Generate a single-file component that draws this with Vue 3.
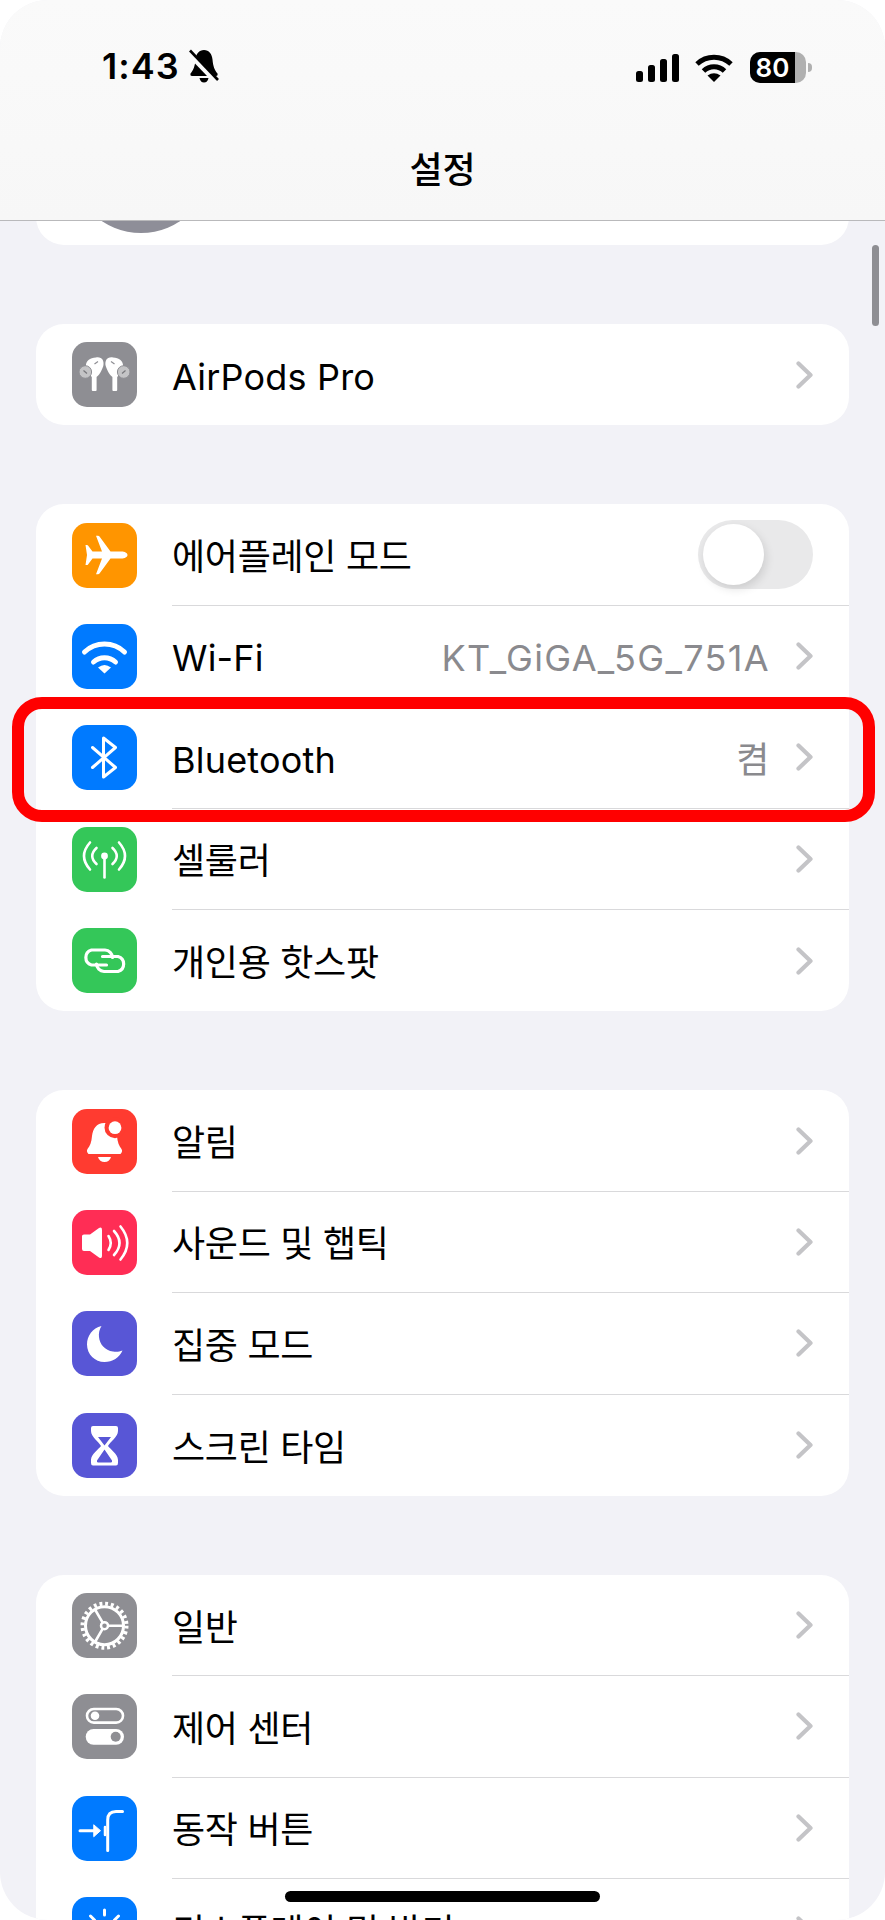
<template>
  <div class="phone">
    <div class="scroll">
      <div class="card profile">
        <div class="avatar"></div>
      </div>

      <div v-for="(group, g) in groups" :key="g" class="card">
        <div v-for="row in group" :key="row.label" class="row">
          <div class="app-icon" :style="{ background: row.color }">
            <svg viewBox="0 0 65 65" width="65" height="65">
              <g v-if="row.icon === 'airpods'">
                <g v-for="side in ['', 'translate(65 0) scale(-1 1)']" :key="side" :transform="side">
                  <rect x="19.800" y="33" width="4.800" height="16" rx="1" fill="#fff" />
                  <path d="M24 15.500C30 14.500 32.500 19 31.300 24 30 28 27 34 24 35H20C17 33 15 28 14 24 13.500 19 18 16 24 15.500z" fill="#fff" />
                  <circle cx="13.300" cy="30" r="6.300" fill="#c4c4c6" stroke="#8e8e93" stroke-width="1" />
                  <path d="M11.500 28.500l3.500 3" stroke="#77777b" stroke-width="1.200" />
                  <path d="M22.500 22l3.500-2.500" stroke="#8e8e93" stroke-width="1.200" />
                </g>
              </g>
              <path v-else-if="row.icon === 'plane'" fill="#fff" d="M55.500 32c0-2-3-3.500-6-3.500H38.500L27.500 13.500q-.5-.7-1.500-.7h-2L30 28.500H20.500l-4.500-6q-.3-.5-1-.5h-1.500L15 32l-1.500 10H15q.7 0 1-.5l4.500-6H30L24 51.200h2q1 0 1.500-.7L38.500 35.500h11c3 0 6-1.500 6-3.500z" />
              <g v-else-if="row.icon === 'wifi'" fill="none" stroke="#fff" stroke-width="5" stroke-linecap="round">
                <path d="M12.500 28A29 29 0 0 1 52.500 28" />
                <path d="M21.500 38A16.500 16.500 0 0 1 43.500 38" />
                <path d="M32.500 49.500L26 43.500Q32.500 38.500 39 43.500Z" fill="#fff" stroke="none" />
              </g>
              <path v-else-if="row.icon === 'bluetooth'" fill="none" stroke="#fff" stroke-width="3" stroke-linejoin="round" stroke-linecap="round" d="M20.500 22.500L43.500 42.500 31.500 52V13L43.500 22.500 20.500 42.500" />
              <g v-else-if="row.icon === 'cellular'" fill="none" stroke="#fff" stroke-width="2.600" stroke-linecap="round">
                <circle cx="32.500" cy="29" r="3.400" fill="#fff" stroke="none" />
                <path d="M32.500 29V50.500" />
                <path d="M24.500 21Q16 29 24.500 37" />
                <path d="M40.500 21Q49 29 40.500 37" />
                <path d="M18 15.500Q6 29 18 42.500" />
                <path d="M47 15.500Q59 29 47 42.500" />
              </g>
              <g v-else-if="row.icon === 'link'" fill="none" stroke="#fff" stroke-width="3.200" stroke-linecap="round">
                <path d="M34.500 37H19.500A7.800 7.800 0 0 1 19.500 22H33A7.800 7.800 0 0 1 40.500 29.500" />
                <path d="M30.500 28.500H46A7.800 7.800 0 0 1 46 43.500H32A7.800 7.800 0 0 1 24.500 36" />
              </g>
              <g v-else-if="row.icon === 'bell'">
                <path fill="#fff" d="M32.500 14C24 14 21 20 20 27c-.5 6-2 10-4.500 13Q14 42.500 16.500 45h32q2.500-2.500 1-5c-2.500-3-4-7-4.500-13C44 20 41 14 32.500 14z" />
                <path fill="#fff" d="M26 48h13q-1.500 5-6.500 5T26 48z" />
                <circle cx="43" cy="18.700" r="10.500" fill="#ff3b30" />
                <circle cx="43" cy="18.700" r="6.400" fill="#fff" />
              </g>
              <g v-else-if="row.icon === 'sound'" fill="none" stroke="#fff" stroke-width="2.600" stroke-linecap="round">
                <path fill="#fff" stroke="none" d="M10 26q0-1.500 2-1.500h6L27 18q3-1.500 3 2v26q0 3-3 1.500L18 41h-6q-2 0-2-2z" />
                <path d="M36.500 26Q41 33 36.500 40" />
                <path d="M42 21Q53 33 42 45" />
                <path d="M48.500 16.500Q62 33 48.500 49.500" />
              </g>
              <path v-else-if="row.icon === 'moon'" fill="#fff" d="M29.500 15C20.500 17 15 25 15 33.500 15 43.500 23 51 32.500 51c8 0 15-4.500 18-11.500-3.500 1.500-6.500 1.500-9.500 1-8-1-13.500-7.500-14-14.500-.5-4 .5-8 2.500-11z" />
              <g v-else-if="row.icon === 'hourglass'">
                <path fill="#fff" d="M21 13h23q2 0 2 2v3c0 6-8 11-10 15 2 3 10 8 10 14v3q0 2.500-2 2.500H21q-2 0-2-2.500v-3c0-6 8-11 10-14-2-4-10-9-10-15v-3q0-2 2-2z" />
                <path fill="#5856d6" d="M26 24h13l-6.500 8.500zM32.500 36.500L25 47.500q-.5 2 1 2h13q1.500 0 1-2z" />
              </g>
              <g v-else-if="row.icon === 'gear'" fill="none" stroke="#fff">
                <circle cx="32.500" cy="32.700" r="22" stroke-width="4" stroke-dasharray="2.900 2.860" />
                <circle cx="32.500" cy="32.700" r="19" stroke-width="3" />
                <circle cx="32.500" cy="32.700" r="3.500" stroke-width="2.500" />
                <path stroke-width="2.600" d="M36 32.700H51M30.700 29.700L23 16.500M30.700 35.700L23 49" />
              </g>
              <g v-else-if="row.icon === 'toggles'">
                <rect x="15" y="15" width="36" height="13.600" rx="6.800" fill="none" stroke="#fff" stroke-width="2.600" />
                <circle cx="23" cy="21.800" r="4.300" fill="#fff" />
                <rect x="13.700" y="35" width="38.300" height="15.700" rx="7.850" fill="#fff" />
                <circle cx="43.700" cy="42.800" r="5" fill="#8e8e93" />
              </g>
              <g v-else-if="row.icon === 'action'" fill="none" stroke="#fff" stroke-linecap="round" stroke-width="3">
                <path d="M8 34.700H24" />
                <path d="M22 29L28.500 34.700 22 40.500Z" fill="#fff" stroke-width="1" stroke-linejoin="round" />
                <path d="M35.700 54.500V24Q35.700 15.500 44 15.500H50.500" />
                <path d="M33 31V39" stroke-width="2.500" />
              </g>
              <g v-else-if="row.icon === 'sun'" fill="none" stroke="#fff" stroke-width="3" stroke-linecap="round">
                <path d="M32.500 13V18M18.500 19L22.500 23M46.500 19L42.500 23" />
                <circle cx="32.500" cy="35" r="9" fill="#fff" stroke="none" />
              </g>
            </svg>
          </div>
          <div class="row-body">
            <span class="label" :class="{ latin: isLatin(row.label) }">{{ row.label }}</span>
            <div v-if="row.toggle" class="switch"><span class="knob"></span></div>
            <template v-else>
              <span v-if="row.value" class="value" :class="{ latin: isLatin(row.value) }">{{ row.value }}</span>
              <svg class="chevron" viewBox="0 0 17 28" width="17" height="28">
                <path d="M2.500 2.500L14.500 14 2.500 25.500" fill="none" stroke="#c4c4c7" stroke-width="4.200" stroke-linecap="round" stroke-linejoin="round" />
              </svg>
            </template>
          </div>
        </div>
      </div>
    </div>

    <header class="nav">
      <div class="status">
        <div class="status-left">
          <span class="time">1:43</span>
          <svg viewBox="0 0 30 34" width="30" height="34">
            <path d="M15 1c-5 0-8 4-8.500 9.500C6 17 4.500 21 1.500 24.500Q1 27 3 27h24q2 0 1.500-2.500C25.500 21 24 17 23.500 10.500 23 5 20 1 15 1z" fill="#000" />
            <path d="M10.500 29h9q-1 4.500-4.500 4.500T10.500 29z" fill="#000" />
            <path d="M0 4L28 33" stroke="#fafafa" stroke-width="6" />
            <path d="M1 1.500L29 31" stroke="#000" stroke-width="2.600" />
          </svg>
        </div>
        <div class="status-right">
          <div class="signal">
            <span class="bar b1"></span>
            <span class="bar b2"></span>
            <span class="bar b3"></span>
            <span class="bar b4"></span>
          </div>
          <svg viewBox="0 0 38 28" width="38" height="28" class="wifi">
            <path d="M2 10A25 25 0 0 1 36 10" fill="none" stroke="#000" stroke-width="5" />
            <path d="M8.500 17A15 15 0 0 1 29.500 17" fill="none" stroke="#000" stroke-width="5" />
            <path d="M19 28L12.500 21.500Q19 17 25.500 21.500Z" fill="#000" />
          </svg>
          <div class="battery"><span class="battery-fill">80</span></div>
          <span class="battery-tip"></span>
        </div>
      </div>
      <h1 class="title">설정</h1>
    </header>

    <div class="scrollbar"></div>
    <div class="highlight"></div>
    <div class="home-bar"></div>
  </div>
</template>

<script setup>
const blue = '#007aff'
const green = '#34c759'
const gray = '#8e8e93'
const indigo = '#5856d6'

const groups = [
  [{ label: 'AirPods Pro', icon: 'airpods', color: gray }],
  [
    { label: '에어플레인 모드', icon: 'plane', color: '#ff9500', toggle: true },
    { label: 'Wi-Fi', icon: 'wifi', color: blue, value: 'KT_GiGA_5G_751A' },
    { label: 'Bluetooth', icon: 'bluetooth', color: blue, value: '켬' },
    { label: '셀룰러', icon: 'cellular', color: green },
    { label: '개인용 핫스팟', icon: 'link', color: green }
  ],
  [
    { label: '알림', icon: 'bell', color: '#ff3b30' },
    { label: '사운드 및 햅틱', icon: 'sound', color: '#ff2d55' },
    { label: '집중 모드', icon: 'moon', color: indigo },
    { label: '스크린 타임', icon: 'hourglass', color: indigo }
  ],
  [
    { label: '일반', icon: 'gear', color: gray },
    { label: '제어 센터', icon: 'toggles', color: gray },
    { label: '동작 버튼', icon: 'action', color: blue },
    { label: '디스플레이 및 밝기', icon: 'sun', color: blue }
  ]
]

// Inter sits a little high next to the Hangul font
const isLatin = (text) => /^[\x20-\x7e]+$/.test(text)
</script>

<style>
html,
body {
  background: #fff;
}
</style>

<style scoped>
.phone {
  position: relative;
  width: 885px;
  height: 1920px;
  overflow: hidden;
  border-radius: 48px;
  background: #f2f2f7;
  font-family: Inter, "Noto Sans CJK KR", sans-serif;
  color: #000;
}

.scroll {
  display: flex;
  flex-direction: column;
  gap: 79px;
  padding: 0 36px;
}

.card {
  background: #fff;
  border-radius: 28px;
  overflow: hidden;
}

.profile {
  height: 245px;
  display: flex;
  align-items: flex-end;
  padding: 0 0 12px 35px;
  box-sizing: border-box;
}

.avatar {
  width: 140px;
  height: 140px;
  border-radius: 50%;
  background: #8e8e98;
}

.row {
  display: flex;
  align-items: center;
  height: 101.4px;
  padding-left: 36px;
}

.app-icon {
  width: 65px;
  height: 65px;
  flex: none;
  border-radius: 15px;
  margin-right: 35px;
}

.app-icon svg {
  display: block;
}

.row-body {
  flex: 1;
  height: 100%;
  display: flex;
  align-items: center;
  padding-right: 36px;
  box-sizing: border-box;
  border-bottom: 1.5px solid #d9d9db;
}

.row:last-child .row-body {
  border-bottom: none;
}

.label {
  flex: 1;
  font-size: 36px;
  letter-spacing: -0.3px;
  padding-bottom: 1px;
}

.value {
  font-size: 36px;
  letter-spacing: -0.3px;
  color: #8a8a8e;
  margin-right: 27px;
}

.label.latin {
  letter-spacing: 0.2px;
  padding-top: 5px;
  padding-bottom: 0;
}

.value.latin {
  letter-spacing: 1.35px;
  padding-top: 5px;
  margin-right: 26px;
}

.chevron {
  display: block;
  flex: none;
}

.switch {
  position: relative;
  width: 115px;
  height: 69px;
  border-radius: 35px;
  background: #e9e9ea;
}

.knob {
  position: absolute;
  left: 5px;
  top: 4px;
  width: 61px;
  height: 61px;
  border-radius: 50%;
  background: #fff;
  box-shadow: 2px 4px 10px rgba(0, 0, 0, 0.12);
}

.nav {
  position: absolute;
  top: 0;
  left: 0;
  right: 0;
  height: 221px;
  box-sizing: border-box;
  padding-top: 49px;
  background: linear-gradient(#fafafa, #f7f7f7);
  border-bottom: 1.5px solid #b9b9bb;
}

.status {
  display: flex;
  justify-content: space-between;
  align-items: flex-start;
  padding: 0 73px 0 102px;
  height: 34px;
}

.status-left {
  display: flex;
  align-items: center;
  gap: 9px;
}

.time {
  font-size: 36px;
  line-height: 34px;
  font-weight: 600;
  letter-spacing: 1px;
}

.status-right {
  display: flex;
  align-items: center;
  height: 34px;
}

.signal {
  display: flex;
  align-items: flex-end;
  gap: 5px;
  height: 28px;
  margin-right: 16px;
  margin-top: 3px;
}

.bar {
  width: 7px;
  border-radius: 2.5px;
  background: #000;
}

.b1 { height: 11px; }
.b2 { height: 17px; }
.b3 { height: 23px; }
.b4 { height: 28px; }

.wifi {
  margin-top: 3px;
  margin-right: 17px;
}

.battery {
  width: 56px;
  height: 31px;
  margin-top: 3px;
  border-radius: 10px;
  background: #b0b0b0;
  overflow: hidden;
}

.battery-fill {
  display: block;
  width: 45px;
  height: 31px;
  line-height: 31px;
  box-sizing: border-box;
  background: #000;
  color: #fff;
  font-size: 26px;
  font-weight: 600;
  text-align: center;
}

.battery-tip {
  width: 4px;
  height: 9px;
  margin: 3px 0 0 2px;
  border-radius: 0 4px 4px 0;
  background: #b0b0b0;
}

.title {
  margin: 64px 0 0;
  text-align: center;
  font-size: 36px;
  line-height: 46px;
  font-weight: 500;
}

.scrollbar {
  position: absolute;
  left: 872px;
  top: 245px;
  width: 7px;
  height: 81px;
  border-radius: 4px;
  background: #8e8e93;
}

.highlight {
  position: absolute;
  left: 12px;
  top: 697px;
  width: 863px;
  height: 125px;
  box-sizing: border-box;
  border: 12px solid #ff0000;
  border-radius: 30px;
}

.home-bar {
  position: absolute;
  left: 285px;
  top: 1891px;
  width: 315px;
  height: 11px;
  border-radius: 6px;
  background: #000;
}
</style>
